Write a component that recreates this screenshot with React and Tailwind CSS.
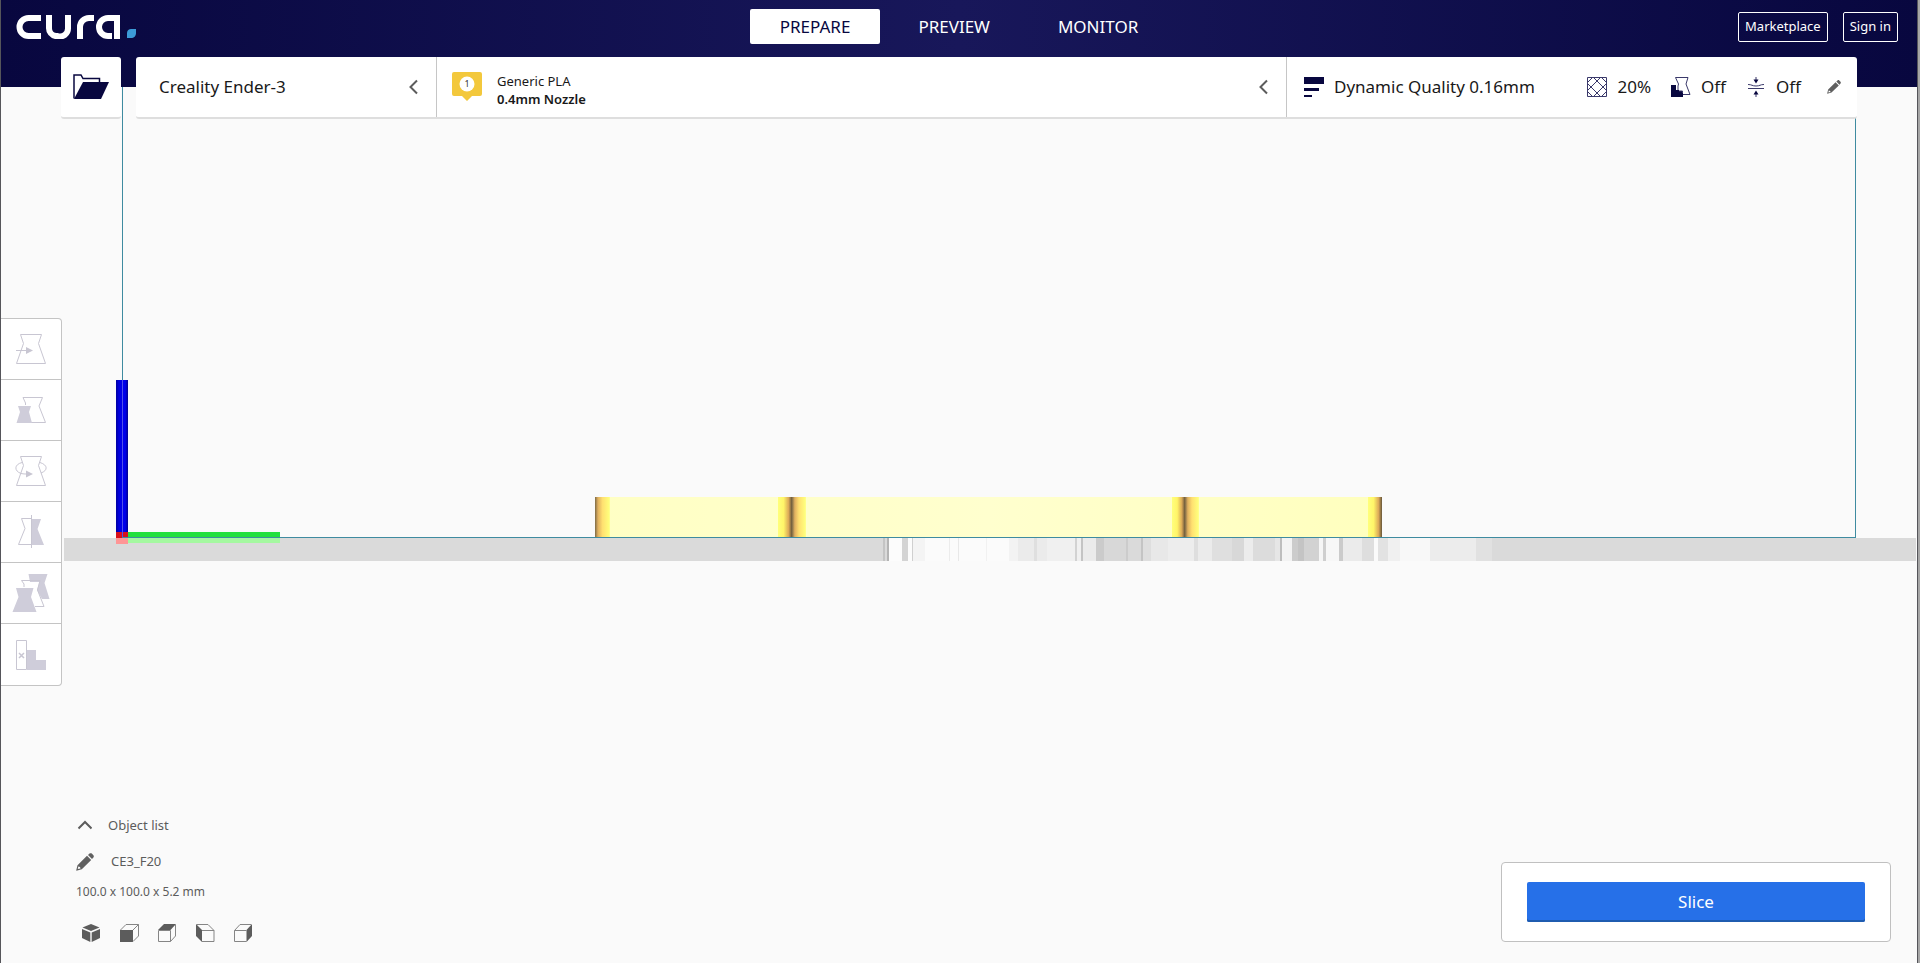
import React from "react";

const toolIcons = [
  {
    name: "Move",
    art: (
      <>
        <path d="M4.500 1.500H25.500L22.500 10.500L29.500 30.500H0.500L7.500 10.500Z" fill="none" stroke="#c8c6d2" />
        <path d="M0 17.500H12" stroke="#c8c6d2" fill="none" />
        <path d="M10 14L17 17.500L10 21Z" fill="#c8c6d2" />
      </>
    ),
  },
  {
    name: "Scale",
    art: (
      <>
        <path d="M9.500 11V9L7 3.500H26.500L23 12L29.500 28.500H15" fill="none" stroke="#c8c6d2" />
        <path d="M2 12H15L13 18L16 29H0.500L4 18Z" fill="#cfcdda" />
      </>
    ),
  },
  {
    name: "Rotate",
    art: (
      <>
        <path d="M4.500 1.500H25.500L22.500 10.500L29.500 30.500H0.500L7.500 10.500Z" fill="none" stroke="#c8c6d2" />
        <path d="M6 7.500C-2 9.500 -2 16 5 18.500C7 19 9 19 11 19M24 7.500C32 10 32 15.500 25 18" stroke="#c8c6d2" fill="none" />
        <path d="M10 15.500L17 19L10 22.500Z" fill="#c8c6d2" />
      </>
    ),
  },
  {
    name: "Mirror",
    art: (
      <>
        <path d="M15 3H25L21.500 13L28 29H15Z" fill="#cfcdda" />
        <path d="M15 2.500H5.500L9 12.500L2.500 28.500H15M15.500 -1V32" fill="none" stroke="#c8c6d2" />
      </>
    ),
  },
  {
    name: "Per Model Settings",
    art: (
      <>
        <path d="M12.500 -3H31.500L28.500 6L33.500 22H26L21 13L23.500 5H14Z" fill="#cfcdda" />
        <path d="M8 10V7L5.500 3.500H24L21.500 13L28 29.500H19" fill="none" stroke="#c8c6d2" />
        <path d="M0 11H17.500L15 20L20.500 35H-3.500L2.500 20Z" fill="#cfcdda" />
      </>
    ),
  },
  {
    name: "Support Blocker",
    art: (
      <>
        <path d="M11 11H20V21H30V31H11Z" fill="#cfcdda" />
        <path d="M0.500 1.500H10.500V30.500H0.500Z" fill="#ffffff" stroke="#c8c6d2" />
        <path d="M3 14L8 19M8 14L3 19" stroke="#c8c6d2" strokeWidth="1.500" fill="none" />
      </>
    ),
  },
];

const cubeViews = [
  {
    name: "3D view",
    art: (
      <>
        <path d="M9 0L17.500 3.500L9 7L0.500 3.500Z" />
        <path d="M0 5L8.300 8.500V18L0 14Z" />
        <path d="M18 5L9.700 8.500V18L18 14Z" />
      </>
    ),
  },
  {
    name: "Front view",
    art: (
      <>
        <path d="M0 6H13V18H0Z" />
        <path d="M0.500 6L6 0.500H18.500V12L13 17.500M13 6L18.500 0.500" fill="none" stroke="#858585" />
      </>
    ),
  },
  {
    name: "Top view",
    art: (
      <>
        <path d="M0 6L6 0H18L12.500 6Z" />
        <path d="M0.500 6.500H12.500V17.500H0.500ZM12.500 17.500L17.500 12V0.500" fill="none" stroke="#858585" />
      </>
    ),
  },
  {
    name: "Left view",
    art: (
      <>
        <path d="M0 0L6 6V18L0 12Z" />
        <path d="M0.500 0.500H12L18 6.500V17.500H6M6 6.500H18" fill="none" stroke="#858585" />
      </>
    ),
  },
  {
    name: "Right view",
    art: (
      <>
        <path d="M18 0L12.500 6V18L18 12Z" />
        <path d="M12.500 17.500H0.500V6.500H12.500M0.500 6.500L6 0.500H17" fill="none" stroke="#858585" />
      </>
    ),
  },
];

const bedStripes = [
  [883, 2, "#c4c4c4"], [887, 2, "#b4b4b4"], [889, 13, "#fcfcfc"], [902, 6, "#d4d4d4"],
  [908, 4, "#fcfcfc"], [912, 1, "#d0d0d0"], [913, 12, "#f4f4f4"], [925, 84, "#fbfbfb"],
  [949, 1, "#ececec"], [958, 1, "#e8e8e8"], [986, 1, "#f1f1f1"], [1009, 9, "#f3f3f3"],
  [1018, 18, "#ebebeb"], [1034, 3, "#dfdfdf"], [1037, 10, "#ebebeb"], [1047, 28, "#f0f0f0"],
  [1075, 2, "#d2d2d2"], [1077, 4, "#f0f0f0"], [1081, 2, "#c4c4c4"], [1083, 13, "#ebebeb"],
  [1096, 8, "#cbcbcb"], [1104, 22, "#d8d8d8"], [1126, 2, "#cccccc"], [1128, 13, "#dadada"],
  [1141, 2, "#c4c4c4"], [1143, 8, "#dedede"], [1151, 17, "#e8e8e8"], [1168, 26, "#ededed"],
  [1194, 4, "#dedede"], [1198, 14, "#ebebeb"], [1212, 20, "#dfdfdf"], [1232, 12, "#d8d8d8"],
  [1244, 9, "#ececec"], [1253, 22, "#dcdcdc"], [1275, 5, "#e6e6e6"], [1280, 2, "#bdbdbd"],
  [1282, 10, "#f3f3f3"], [1292, 6, "#cccccc"], [1298, 6, "#c4c4c4"], [1304, 15, "#d2d2d2"],
  [1319, 4, "#f6f6f6"], [1323, 3, "#cfcfcf"], [1326, 13, "#f7f7f7"], [1339, 4, "#cbcbcb"],
  [1343, 19, "#ebebeb"], [1362, 12, "#dedede"], [1374, 4, "#fafafa"], [1378, 10, "#e2e2e2"],
  [1388, 12, "#f0f0f0"], [1400, 30, "#f8f8f8"], [1430, 46, "#ececec"], [1476, 16, "#e1e1e1"],
];

function BuildScene() {
  return (
    <svg className="absolute inset-0 h-full w-full" viewBox="1 0 1916 963" preserveAspectRatio="xMidYMid slice" aria-hidden="true">
      <defs>
        <linearGradient id="edgeStart">
          <stop offset="0" stopColor="#7d6a45" />
          <stop offset="0.2" stopColor="#e0b060" />
          <stop offset="0.5" stopColor="#ffe070" />
          <stop offset="0.95" stopColor="#ffff7c" />
          <stop offset="1" stopColor="#ffffa8" />
        </linearGradient>
        <linearGradient id="edgeEnd">
          <stop offset="0" stopColor="#ffff7c" />
          <stop offset="0.4" stopColor="#fff568" />
          <stop offset="0.75" stopColor="#dcaa58" />
          <stop offset="1" stopColor="#66563a" />
        </linearGradient>
        <linearGradient id="modelFace">
          <stop offset="0" stopColor="#ffffc4" />
          <stop offset="0.5" stopColor="#ffffce" />
          <stop offset="1" stopColor="#ffffbe" />
        </linearGradient>
        <linearGradient id="zAxis">
          <stop offset="0" stopColor="#0000a0" />
          <stop offset="0.25" stopColor="#0000e0" />
          <stop offset="0.75" stopColor="#0000f0" />
          <stop offset="1" stopColor="#000090" />
        </linearGradient>
      </defs>
      <g shapeRendering="crispEdges">
        <rect x="64" y="538" width="1852" height="23" fill="#dadada" />
        {bedStripes.map(([x, w, fill]) => (
          <rect key={x} x={x} y="538" width={w} height="23" fill={fill} />
        ))}
        <rect x="595" y="497" width="787" height="40" fill="url(#modelFace)" />
        <rect x="595" y="497" width="15" height="40" fill="url(#edgeStart)" />
        <rect x="778" y="497" width="14" height="40" fill="url(#edgeEnd)" />
        <rect x="792" y="497" width="14" height="40" fill="url(#edgeStart)" />
        <rect x="1172" y="497" width="13" height="40" fill="url(#edgeEnd)" />
        <rect x="1185" y="497" width="14" height="40" fill="url(#edgeStart)" />
        <rect x="1368" y="497" width="14" height="40" fill="url(#edgeEnd)" />
        <rect x="116" y="380" width="12" height="152" fill="url(#zAxis)" />
        <rect x="128" y="538" width="152" height="5" fill="#a4f8a0" />
        <rect x="128" y="532" width="152" height="6" fill="#22e03c" />
        <rect x="116" y="532" width="12" height="6" fill="#d8101c" />
        <rect x="116" y="538" width="12" height="6" fill="#ff9696" />
        <rect x="122" y="87" width="1" height="293" fill="#3e8ba0" />
        <rect x="122" y="380" width="1" height="157" fill="#5050e8" />
        <rect x="122" y="537" width="1734" height="1" fill="#3e8ba0" />
        <rect x="1855" y="87" width="1" height="451" fill="#3e8ba0" />
      </g>
    </svg>
  );
}

function Chevron({ direction }) {
  return direction === "up" ? (
    <svg className="h-4 w-4" viewBox="0 0 16 16" fill="none" stroke="#5c5c5c" strokeWidth="2">
      <path d="M2.500 10.500L9 4L15.500 10.500" />
    </svg>
  ) : (
    <svg className="h-4 w-4" viewBox="0 0 16 16" fill="none" stroke="#5c5c5c" strokeWidth="2">
      <path d="M12 1.500L5.500 8L12 14.500" />
    </svg>
  );
}

function Pencil({ className }) {
  return (
    <svg className={className} viewBox="0 0 18 18" fill="#606060">
      <path d="M11 2.800L15.200 7L5.800 16.200L0.300 17.700V17L1.500 12.200ZM2.300 13.500L1.800 16L4.500 15.500L4 14L2.300 13.500Z" fillRule="evenodd" />
      <path d="M12 2L13.500 0.600C14.200 0 15.200 0 15.800 0.600L17.400 2.200C18 2.800 18 3.800 17.400 4.500L16 6Z" />
    </svg>
  );
}

function Logo() {
  return (
    <svg className="h-6 w-30" viewBox="0 0 120 24" fill="none" role="img" aria-label="cura">
      <g stroke="#ffffff" strokeWidth="6">
        <path d="M25 3H12.500A9 9 0 0 0 12.500 21H25" />
        <path d="M33 0V13A8 8 0 0 0 39.500 21H41.500A8 8 0 0 0 52 13V0" />
        <path d="M64 25V12A9 9 0 0 1 73 3H78" />
        <path d="M101 25V3H92A8.500 8.500 0 0 0 92 21H96" />
      </g>
      <path d="M111 18C111 15.500 113 14 115 14H120V18C120 21 118 23 115 23H111Z" fill="#3c9bd8" />
    </svg>
  );
}

export default function App() {
  return (
    <div className="min-h-screen bg-[#a6a6a6] pr-0.5">
      <div className="relative flex min-h-screen flex-col overflow-hidden border-x border-[#55555a] bg-[#fafafa] font-['Noto_Sans','Open_Sans',sans-serif] text-[#191919]">
        <BuildScene />
        <header className="relative h-[87px] bg-linear-to-r from-[#08073f] via-[#18175a] to-[#08073f]">
          <div className="grid h-[57px] grid-cols-[1fr_auto_1fr] items-start">
            <div className="pt-[15px] pl-[15px]">
              <Logo />
            </div>
            <nav className="flex gap-2 pt-[9px] text-[17px] text-white">
              <button className="h-[35px] rounded-xs bg-white px-[30px] text-[#08073f]">PREPARE</button>
              <button className="h-[35px] px-[30px]">PREVIEW</button>
              <button className="h-[35px] px-[30px]">MONITOR</button>
            </nav>
            <div className="flex justify-end gap-[15px] pt-3 pr-[19px] text-[13px] text-white">
              <button className="h-[30px] rounded-xs border border-white px-[6px]">Marketplace</button>
              <button className="h-[30px] rounded-xs border border-white px-[6px]">Sign in</button>
            </div>
          </div>
        </header>

        <div className="relative -mt-[30px] flex gap-[15px] pr-[60px] pl-[60px]">
          <button aria-label="Open file" className="flex h-[62px] w-[60px] items-center justify-center rounded-[3px] border-b-2 border-[#dedede] bg-white">
            <svg className="h-[26px] w-9" viewBox="0 0 36 26">
              <path d="M1 24.500V1H8L10 4.500H26.500V8" fill="none" stroke="#08073f" strokeWidth="1.500" />
              <path d="M10 8H36L28 25H1Z" fill="#08073f" />
            </svg>
          </button>
          <div className="flex h-[62px] min-w-0 flex-1 rounded-[3px] border-b-2 border-[#dedede] bg-white">
            <button className="flex w-[301px] items-center justify-between border-r border-[#c6c6c6] pr-[15px] pl-[23px] text-[17px]">
              Creality Ender-3
              <Chevron />
            </button>
            <button className="flex flex-1 items-center border-r border-[#c6c6c6] pr-[15px] pl-[15px] text-left">
              <svg className="h-[30px] w-[30px]" viewBox="0 0 30 30">
                <path d="M2 0H28Q30 0 30 2V22Q30 24 28 24H20L15 29L10 24H2Q0 24 0 22V2Q0 0 2 0Z" fill="#f3c83c" />
                <circle cx="15" cy="12" r="7.500" fill="#ffffff" />
                <text x="15" y="15" textAnchor="middle" fontSize="9" fill="#333333">1</text>
              </svg>
              <span className="ml-[15px] flex-1 pt-[5px] text-[13px] leading-[18px]">
                <span className="block">Generic PLA</span>
                <span className="block font-semibold">0.4mm Nozzle</span>
              </span>
              <Chevron />
            </button>
            <button className="flex w-[570px] items-center pr-4 pl-[17px] text-[17px]">
              <svg className="h-5 w-5" viewBox="0 0 20 20" fill="#08073f">
                <path d="M0 0H20V7H0ZM0 11H15V14H0ZM0 18H8V20H0Z" />
              </svg>
              <span className="ml-[10px] flex-1 text-left">Dynamic Quality 0.16mm</span>
              <span className="flex items-center gap-[10px]">
                <svg className="h-5 w-5" viewBox="0 0 20 20" fill="none" stroke="#3a396a">
                  <path d="M0.500 0.500H19.500V19.500H0.500ZM0 14L14 0M6 20L20 6M6 0L20 14M0 6L14 20M0 6L6 0M14 20L20 14M14 0L20 6M0 14L6 20" />
                </svg>
                20%
              </span>
              <span className="ml-5 flex items-center gap-[10px]">
                <svg className="h-5 w-5" viewBox="0 0 20 20">
                  <path d="M0 8H5V14H12V20H0Z" fill="#08073f" />
                  <path d="M4.500 0.500H17L15 7L19 17.500H11.500V14H7V9L7.500 7Z" fill="#ffffff" stroke="#3a396a" />
                  <path d="M0 8H4V13H8V16H12V20H0Z" fill="#08073f" />
                </svg>
                Off
              </span>
              <span className="ml-5 flex items-center gap-[10px]">
                <svg className="h-5 w-5" viewBox="0 0 20 20" fill="none" stroke="#3a396a">
                  <path d="M2 7.500C6 7.500 6 9 10 9S14 7.500 18 7.500M2 11.500H18M10 0V4M10 16V20" />
                  <path d="M7.500 2.500H12.500L10 6.500ZM7.500 17.500H12.500L10 13.500Z" fill="#08073f" stroke="none" />
                </svg>
                Off
              </span>
              <Pencil className="ml-[26px] h-[14px] w-[14px]" />
            </button>
          </div>
        </div>

        <div className="relative mt-[199px] flex w-[61px] flex-col divide-y divide-[#c4c4c4] rounded-r-[4px] border border-l-0 border-[#c4c4c4] bg-white">
          {toolIcons.map(({ name, art }) => (
            <button key={name} aria-label={name} className="flex h-[61px] items-center justify-center">
              <svg className="h-8 w-[30px] overflow-visible" viewBox="0 0 30 32">{art}</svg>
            </button>
          ))}
        </div>

        <footer className="relative mt-auto flex items-end justify-between pr-[26px] pb-[21px] pl-[75px] text-[13px] text-[#5c5c5c]">
          <div>
            <button className="flex h-6 items-center gap-4">
              <Chevron direction="up" />
              Object list
            </button>
            <button className="mt-3 flex h-6 items-center gap-[17px]">
              <Pencil className="h-[18px] w-[18px]" />
              CE3_F20
            </button>
            <p className="mt-2 text-xs leading-5">100.0 x 100.0 x 5.2 mm</p>
            <div className="mt-[22px] flex gap-5 pl-[6px]">
              {cubeViews.map(({ name, art }) => (
                <button key={name} aria-label={name}>
                  <svg className="h-[18px] w-[18px] overflow-visible" viewBox="0 0 18 18" fill="#5c5c5c">{art}</svg>
                </button>
              ))}
            </div>
          </div>
          <div className="w-[390px] rounded-[4px] border border-[#c0c0c0] bg-white px-[25px] py-[19px]">
            <button className="block h-10 w-full rounded-xs bg-[#2670e8] text-[17px] text-white shadow-[inset_0_-2px_0_#1f5cb0]">Slice</button>
          </div>
        </footer>
      </div>
    </div>
  );
}
